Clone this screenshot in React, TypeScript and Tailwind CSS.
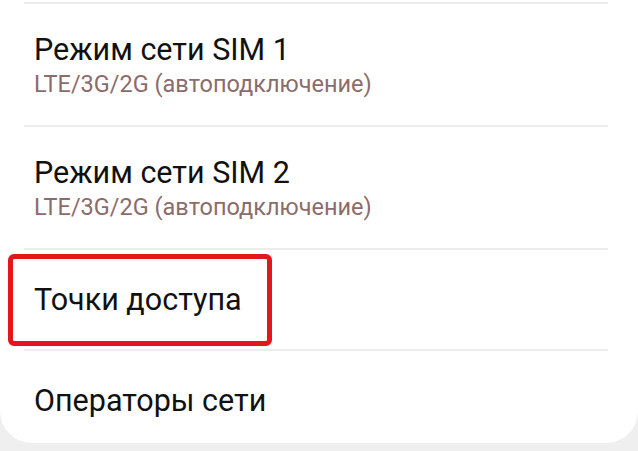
import React from 'react';

const font = { fontFamily: 'Roboto, "Noto Sans", sans-serif' };

function Divider() {
  return <div className="h-[2px] bg-[#ececec] ml-[24px] mr-[30px]" />;
}

export default function App() {
  return (
    <div className="w-[638px] h-[451px] bg-[#efefef] overflow-hidden" style={font}>
      <div className="relative bg-white rounded-b-[32px] h-[443px] pt-[2px]">
        <Divider />
        <div className="h-[121px] pl-[34px] pt-[28px]">
          <div className="text-[30.5px] leading-[36px] text-[#111]">Режим сети SIM 1</div>
          <div className="text-[23.5px] leading-[28px] text-[#8c6c6b] mt-[2px]">LTE/3G/2G (автоподключение)</div>
        </div>
        <Divider />
        <div className="h-[121px] pl-[34px] pt-[28px]">
          <div className="text-[30.5px] leading-[36px] text-[#111]">Режим сети SIM 2</div>
          <div className="text-[23.5px] leading-[28px] text-[#8c6c6b] mt-[2px]">LTE/3G/2G (автоподключение)</div>
        </div>
        <Divider />
        <div className="h-[99px] pl-[34px] flex items-center">
          <div className="text-[30.5px] leading-[36px] text-[#111]">Точки доступа</div>
        </div>
        <Divider />
        <div className="h-[92px] pl-[34px] pt-[32px]">
          <div className="text-[30.5px] leading-[36px] text-[#111]">Операторы сети</div>
        </div>
        <div className="absolute left-[8px] top-[254px] w-[264px] h-[92px] border-[5px] border-[#e3161b] rounded-[6px]" />
      </div>
    </div>
  );
}
